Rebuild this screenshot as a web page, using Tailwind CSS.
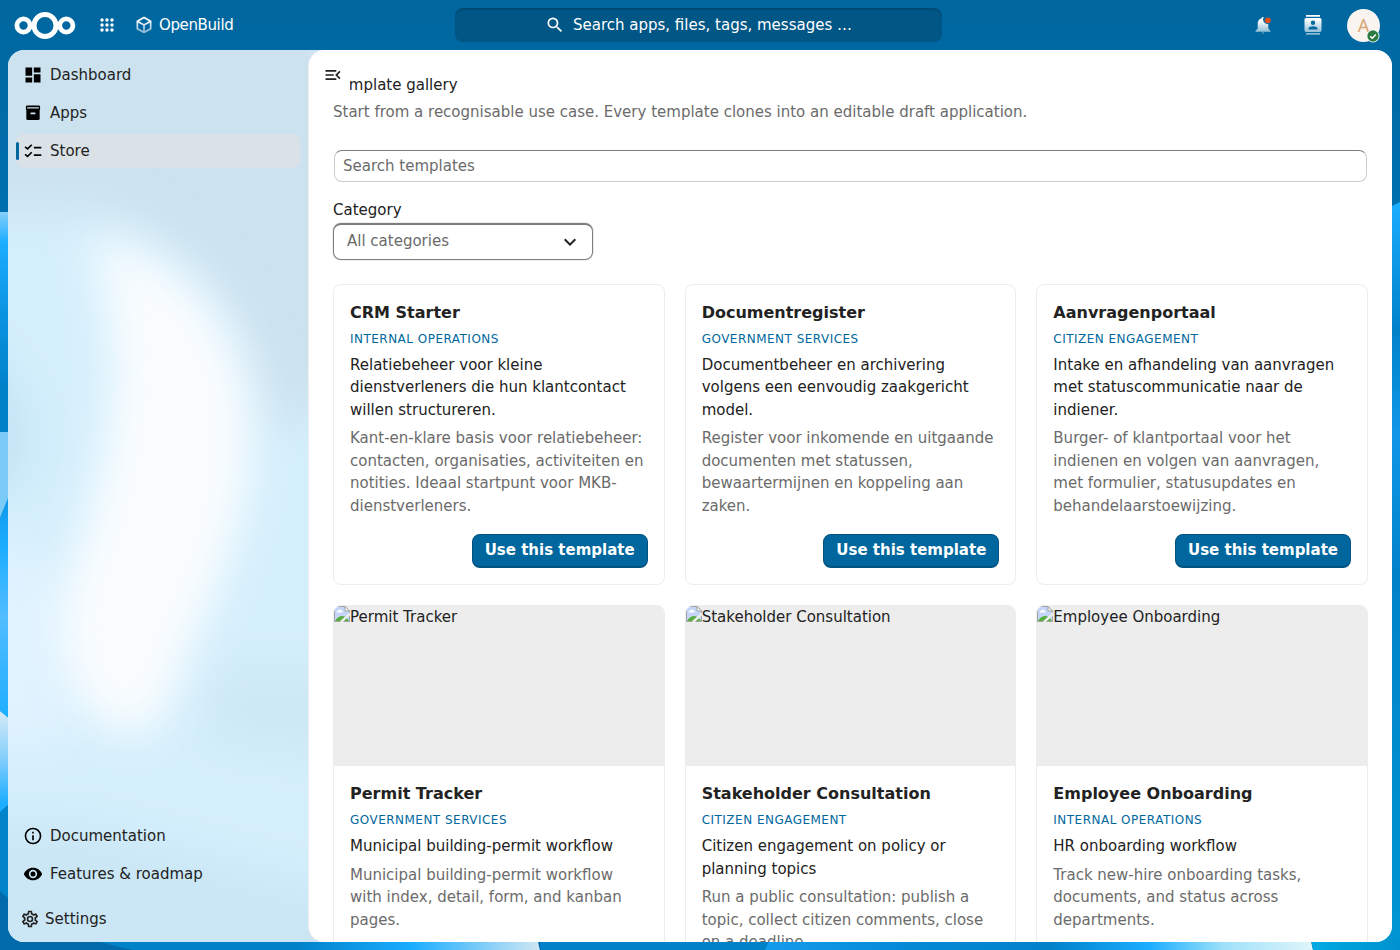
<!DOCTYPE html>
<html lang="en">
<head>
    <meta charset="UTF-8">
    <meta name="viewport" content="width=device-width, initial-scale=1.0">
    <title>Template gallery - OpenBuild</title>
    <script src="https://cdn.jsdelivr.net/npm/@tailwindcss/browser@4"></script>
</head>
<body class="relative flex h-screen flex-col overflow-hidden bg-[#006aa3] font-['DejaVu_Sans',sans-serif] text-[15px] leading-normal text-[#222]">
    <!-- Wallpaper -->
    <svg class="absolute inset-0 -z-10 h-full w-full" viewBox="0 0 1400 950" preserveAspectRatio="none" aria-hidden="true">
        <defs>
            <linearGradient id="base" x1="0" y1="0" x2="0" y2="1"><stop offset="0" stop-color="#00669e"/><stop offset="0.3" stop-color="#0073b5"/><stop offset="1" stop-color="#006aab"/></linearGradient>
            <linearGradient id="l1" x1="0" y1="0" x2="0" y2="1"><stop offset="0" stop-color="#86cffb"/><stop offset="0.14" stop-color="#1badff"/><stop offset="0.45" stop-color="#0b94e2"/><stop offset="0.8" stop-color="#0082c9"/><stop offset="1" stop-color="#0082c9"/></linearGradient>
            <linearGradient id="l2" x1="0" y1="0" x2="0" y2="1"><stop offset="0" stop-color="#0c94e4"/><stop offset="0.25" stop-color="#1badff"/><stop offset="0.55" stop-color="#52bdff"/><stop offset="1" stop-color="#1badff"/></linearGradient>
            <linearGradient id="l3" x1="0" y1="0" x2="0" y2="1"><stop offset="0" stop-color="#d5eaf5"/><stop offset="0.45" stop-color="#86cffb"/><stop offset="0.9" stop-color="#1badff"/><stop offset="1" stop-color="#1badff"/></linearGradient>
            <linearGradient id="b1" gradientUnits="userSpaceOnUse" x1="0" y1="0" x2="541" y2="0"><stop offset="0.4" stop-color="#0082c9"/><stop offset="0.55" stop-color="#0082c9"/><stop offset="0.76" stop-color="#1badff"/><stop offset="1" stop-color="#d0e7f3"/></linearGradient>
            <linearGradient id="b2" gradientUnits="userSpaceOnUse" x1="765" y1="0" x2="1313" y2="0"><stop offset="0" stop-color="#149cec"/><stop offset="0.25" stop-color="#048ad6"/><stop offset="0.52" stop-color="#0082c9"/><stop offset="0.7" stop-color="#1badff"/><stop offset="0.84" stop-color="#a0e2fa"/><stop offset="1" stop-color="#dff5fa"/></linearGradient>
            <linearGradient id="b3" x1="0" y1="0" x2="1" y2="0"><stop offset="0" stop-color="#00aae2"/><stop offset="1" stop-color="#0092cf"/></linearGradient>
            <linearGradient id="r1" x1="0" y1="0" x2="0" y2="1"><stop offset="0" stop-color="#1badff"/><stop offset="0.17" stop-color="#0082c9"/><stop offset="0.31" stop-color="#1097e8"/><stop offset="0.5" stop-color="#0082c9"/><stop offset="1" stop-color="#0096d2"/></linearGradient>
        </defs>
        <rect width="1400" height="950" fill="url(#base)"/>
        <path d="M100 942Q130 950 160 955H541L538 942Z" fill="url(#b1)"/>
        <path d="M538 930H780V950H541Z" fill="#0082c9"/>
        <path d="M769 941L765 950H1313L1311 941Z" fill="url(#b2)"/>
        <path d="M1384 210L1400 202V950H1384Z" fill="url(#r1)"/>
        <path d="M1311 940H1400V950H1313Z" fill="url(#b3)"/>
        <rect y="212" width="12" height="220" fill="url(#l1)"/>
        <path d="M0 432H12V490L0 518Z" fill="#7bcbf9"/>
        <path d="M0 518L12 488V722L0 711Z" fill="url(#l2)"/>
        <path d="M0 711L12 721V802L0 814Z" fill="url(#l3)"/>
        <path d="M0 812L12 801V902L0 891Z" fill="#0284cb"/>
    </svg>

    <header class="flex h-[50px] shrink-0 items-center text-white">
        <div class="flex flex-1 items-center pl-[13px]">
            <a href="#" aria-label="Home" class="block">
                <svg width="64" height="30" viewBox="0 0 64 30" fill="none" stroke="#fff">
                    <circle cx="10.500" cy="15.500" r="6.600" stroke-width="4.800"/>
                    <circle cx="32" cy="15.500" r="11" stroke-width="5"/>
                    <circle cx="53.300" cy="15.500" r="6.600" stroke-width="4.800"/>
                </svg>
            </a>
            <button type="button" aria-label="All apps" class="ml-4 p-1">
                <svg width="20" height="20" viewBox="0 0 20 20" fill="#fff">
                    <circle cx="5" cy="5" r="1.700"/><circle cx="10" cy="5" r="1.700"/><circle cx="15" cy="5" r="1.700"/>
                    <circle cx="5" cy="10" r="1.700"/><circle cx="10" cy="10" r="1.700"/><circle cx="15" cy="10" r="1.700"/>
                    <circle cx="5" cy="15" r="1.700"/><circle cx="10" cy="15" r="1.700"/><circle cx="15" cy="15" r="1.700"/>
                </svg>
            </button>
            <a href="#" class="ml-[13px] flex items-center gap-[5px]">
                <svg width="20" height="20" viewBox="0 0 24 24">
                    <defs><linearGradient id="fade" x1="0" y1="0" x2="0" y2="1"><stop offset="0.2" stop-color="#fff"/><stop offset="1" stop-color="#fff" stop-opacity="0.5"/></linearGradient></defs>
                    <path fill="url(#fade)" d="M21 16.500C21 16.880 20.790 17.210 20.470 17.380L12.570 21.820C12.410 21.940 12.210 22 12 22S11.590 21.940 11.430 21.820L3.530 17.380C3.210 17.210 3 16.880 3 16.500V7.500C3 7.120 3.210 6.790 3.530 6.620L11.430 2.180C11.590 2.060 11.790 2 12 2S12.410 2.060 12.570 2.180L20.470 6.620C20.790 6.790 21 7.120 21 7.500V16.500M12 4.150L6.040 7.500L12 10.850L17.960 7.500L12 4.150M5 15.910L11 19.290V12.580L5 9.210V15.910M19 15.910V9.210L13 12.580V19.290L19 15.910Z"/>
                </svg>
                <span class="tracking-tight">OpenBuild</span>
            </a>
        </div>
        <button type="button" class="flex h-[34px] w-[487px] items-center justify-center gap-2 rounded-lg bg-[#005685] shadow-[inset_0_2px_1px_rgba(0,0,0,0.12)]">
            <svg width="20" height="20" viewBox="0 0 24 24" fill="#fff"><path d="M9.500,3A6.500,6.500 0 0,1 16,9.500C16,11.110 15.410,12.590 14.440,13.730L14.710,14H15.500L20.500,19L19,20.500L14,15.500V14.710L13.730,14.440C12.590,15.410 11.110,16 9.500,16A6.500,6.500 0 0,1 3,9.500A6.500,6.500 0 0,1 9.500,3M9.500,5C7,5 5,7 5,9.500C5,12 7,14 9.500,14C12,14 14,12 14,9.500C14,7 12,5 9.500,5Z"/></svg>
            Search apps, files, tags, messages …
        </button>
        <div class="flex flex-1 items-center justify-end pr-4">
            <button type="button" aria-label="Notifications" class="mr-[30px]">
                <svg width="20" height="20" viewBox="0 0 20 20">
                    <path fill="url(#fade)" d="M10 2C9.200 2 8.700 2.600 8.700 3.300C6.100 4 4.700 6.100 4.700 8.500V13.500L2.500 16V16.700H17.500V16L15.300 13.500V8.900A4.500 4.500 0 0 1 10.700 2.200ZM8.500 17.500A1.600 1.600 0 0 0 11.500 17.500Z"/>
                    <circle cx="14.800" cy="5.300" r="2.900" fill="#e0501f"/>
                </svg>
            </button>
            <button type="button" aria-label="Contacts" class="mr-6">
                <svg width="20" height="20" viewBox="0 0 20 20">
                    <path fill="url(#fade)" fill-rule="evenodd" d="M3 0H17V1.700H3ZM3.200 2.900H16.800Q18.500 2.900 18.500 4.600V15.200Q18.500 16.900 16.800 16.900H3.200Q1.500 16.900 1.500 15.200V4.600Q1.500 2.900 3.200 2.900ZM10 5.600A2.200 2.200 0 1 0 10 10A2.200 2.200 0 1 0 10 5.600ZM5.500 14.500H14.500V13.500C14.500 12 11.800 11.200 10 11.200S5.500 12 5.500 13.500ZM3 18.100H17V19.800H3Z"/>
                </svg>
            </button>
            <button type="button" aria-label="Account menu" class="relative mr-1 flex size-[33px] items-center justify-center rounded-full bg-[#faf4f1] font-['Noto_Sans',sans-serif] text-lg text-[#d8a676]">
                <span>A</span>
                <svg class="absolute right-0 -bottom-px" width="14" height="14" viewBox="0 0 14 14"><circle cx="7" cy="7" r="6.500" fill="#fff"/><circle cx="7" cy="7" r="5.700" fill="#2d7b41"/><path d="M4.200 7.200L6.200 9.200L9.900 5.400" fill="none" stroke="#fff" stroke-width="1.500"/></svg>
            </button>
        </div>
    </header>

    <div class="mx-2 mb-2 flex min-h-0 flex-1 overflow-hidden rounded-2xl">
        <nav class="relative isolate flex w-[300px] shrink-0 flex-col bg-[#cde4f1]">
            <!-- Wallpaper seen through the frosted sidebar -->
            <svg class="absolute inset-0 -z-10 h-full w-full" viewBox="0 0 300 892" preserveAspectRatio="none" aria-hidden="true">
                <defs>
                    <filter id="soft" x="-50%" y="-50%" width="200%" height="200%"><feGaussianBlur stdDeviation="24"/></filter>
                    <filter id="softer" x="-60%" y="-50%" width="220%" height="200%"><feGaussianBlur stdDeviation="22"/></filter>
                </defs>
                <rect width="300" height="892" fill="#cce2ef"/>
                <g filter="url(#soft)">
                    <path d="M-90 160H80C190 190 250 290 250 380L420 320V980H-90Z" fill="#d4effc"/>
                    <path d="M-90 270Q30 300 22 420L-90 490Z" fill="#c2e4f4"/>
                    <path d="M-90 500Q60 450 60 600V700H-90Z" fill="#e0f3ff"/>
                    <path d="M200 620H420V720L200 690Z" fill="#cde8f5"/>
                    <path d="M-90 765L60 770L420 860V1000H-90Z" fill="#cbe6f5"/>
                </g>
                <path filter="url(#softer)" d="M80 185C170 200 232 270 242 360C248 450 215 530 182 600C165 640 155 690 120 685C70 675 40 610 55 540C90 440 130 330 80 185Z" fill="#fafdff"/>
            </svg>
            <ul class="flex flex-1 flex-col gap-1 p-2">
                <li>
                    <a href="#" class="flex h-[34px] items-center rounded-lg">
                        <span class="flex w-[34px] justify-center"><svg width="20" height="20" viewBox="0 0 24 24"><path d="M13,3V9H21V3M13,21H21V11H13M3,21H11V15H3M3,13H11V3H3V13Z"/></svg></span>
                        Dashboard
                    </a>
                </li>
                <li>
                    <a href="#" class="flex h-[34px] items-center rounded-lg">
                        <span class="flex w-[34px] justify-center"><svg width="20" height="20" viewBox="0 0 24 24"><path fill-rule="evenodd" d="M5 3H19Q20.500 3 20.500 4.500V8H20V19Q20 20.500 18.500 20.500H5.500Q4 20.500 4 19V8H3.500V4.500Q3.500 3 5 3ZM5 5V6.500H19V5ZM9.500 11.500Q9 11.500 9 12V13.500H15V12Q15 11.500 14.500 11.500Z"/></svg></span>
                        Apps
                    </a>
                </li>
                <li class="relative">
                    <a href="#" aria-current="page" class="flex h-[34px] items-center rounded-lg bg-[#dae2e7]">
                        <span class="absolute left-0 h-[18px] w-[3px] rounded-full bg-[#00679e]"></span>
                        <span class="flex w-[34px] justify-center"><svg width="20" height="20" viewBox="0 0 24 24" fill="none" stroke="#000" stroke-width="2"><path d="M2.500 7L5.500 9.500L10.500 4.500M2.500 16L5.500 18.500L10.500 13.500M13 8H22M13 17H22"/></svg></span>
                        Store
                    </a>
                </li>
            </ul>
            <ul class="flex flex-col gap-1 px-2">
                <li>
                    <a href="#" class="flex h-[34px] items-center rounded-lg">
                        <span class="flex w-[34px] justify-center"><svg width="20" height="20" viewBox="0 0 24 24"><path d="M11,9H13V7H11M12,20C7.590,20 4,16.410 4,12C4,7.590 7.590,4 12,4C16.410,4 20,7.590 20,12C20,16.410 16.410,20 12,20M12,2A10,10 0 0,0 2,12A10,10 0 0,0 12,22A10,10 0 0,0 22,12A10,10 0 0,0 12,2M11,17H13V11H11V17Z"/></svg></span>
                        Documentation
                    </a>
                </li>
                <li>
                    <a href="#" class="flex h-[34px] items-center rounded-lg">
                        <span class="flex w-[34px] justify-center"><svg width="20" height="20" viewBox="0 0 24 24"><path d="M12,9A3,3 0 0,0 9,12A3,3 0 0,0 12,15A3,3 0 0,0 15,12A3,3 0 0,0 12,9M12,17A5,5 0 0,1 7,12A5,5 0 0,1 12,7A5,5 0 0,1 17,12A5,5 0 0,1 12,17M12,4.500C7,4.500 2.730,7.610 1,12C2.730,16.390 7,19.500 12,19.500C17,19.500 21.270,16.390 23,12C21.270,7.610 17,4.500 12,4.500Z"/></svg></span>
                        Features &amp; roadmap
                    </a>
                </li>
            </ul>
            <div class="px-3 pt-[11px] pb-[6px]">
                <button type="button" class="flex h-[34px] w-full items-center gap-[5px]">
                    <svg width="20" height="20" viewBox="0 0 24 24" fill="#222"><path d="M12,8A4,4 0 0,1 16,12A4,4 0 0,1 12,16A4,4 0 0,1 8,12A4,4 0 0,1 12,8M12,10A2,2 0 0,0 10,12A2,2 0 0,0 12,14A2,2 0 0,0 14,12A2,2 0 0,0 12,10M10,22C9.750,22 9.540,21.820 9.500,21.580L9.130,18.930C8.500,18.680 7.960,18.340 7.440,17.940L4.950,18.950C4.730,19.030 4.460,18.950 4.340,18.730L2.340,15.270C2.210,15.050 2.270,14.780 2.460,14.630L4.570,12.970L4.500,12L4.570,11L2.460,9.370C2.270,9.220 2.210,8.950 2.340,8.730L4.340,5.270C4.460,5.050 4.730,4.960 4.950,5.050L7.440,6.050C7.960,5.660 8.500,5.320 9.130,5.070L9.500,2.420C9.540,2.180 9.750,2 10,2H14C14.250,2 14.460,2.180 14.500,2.420L14.870,5.070C15.500,5.320 16.040,5.660 16.560,6.050L19.050,5.050C19.270,4.960 19.540,5.050 19.660,5.270L21.660,8.730C21.790,8.950 21.730,9.220 21.540,9.370L19.430,11L19.500,12L19.430,13L21.540,14.630C21.730,14.780 21.790,15.050 21.660,15.270L19.660,18.730C19.540,18.950 19.270,19.040 19.050,18.950L16.560,17.950C16.040,18.340 15.500,18.680 14.870,18.930L14.500,21.580C14.460,21.820 14.250,22 14,22H10M11.250,4L10.880,6.610C9.680,6.860 8.620,7.500 7.850,8.390L5.440,7.350L4.690,8.650L6.800,10.200C6.400,11.370 6.400,12.640 6.800,13.800L4.680,15.360L5.430,16.660L7.860,15.620C8.630,16.500 9.680,17.140 10.870,17.380L11.240,20H12.760L13.130,17.390C14.320,17.140 15.370,16.500 16.140,15.620L18.570,16.660L19.320,15.360L17.200,13.810C17.600,12.640 17.600,11.370 17.200,10.200L19.310,8.650L18.560,7.350L16.150,8.390C15.380,7.500 14.320,6.860 13.120,6.620L12.750,4H11.250Z"/></svg>
                    Settings
                </button>
            </div>
        </nav>

        <div class="flex min-w-0 flex-1 bg-[#cee4f1]">
            <main class="relative min-w-0 flex-1 overflow-hidden rounded-l-2xl border-l border-[#ededed] bg-white px-6">
                <!-- Navigation toggle floats over the heading -->
                <button type="button" aria-label="Close navigation" class="absolute top-2 left-[7px] flex size-[34px] items-center justify-center rounded-sm bg-white">
                    <svg width="20" height="20" viewBox="0 0 24 24" fill="#222"><path d="M21,15.610L19.590,17L14.580,12L19.590,7L21,8.390L17.440,12L21,15.610M3,6H16V8H3V6M3,13V11H13V13H3M3,18V16H16V18H3Z"/></svg>
                </button>
                <h2 class="pt-6">Template gallery</h2>
                <p class="mt-1 text-[#6b6b6b]">Start from a recognisable use case. Every template clones into an editable draft application.</p>
                <div class="mt-[27px] px-px">
                    <input type="text" placeholder="Search templates" aria-label="Search templates" class="block h-8 w-full rounded-lg border border-[#ccc] border-t-[#7d7d7d] bg-white px-2 placeholder:text-[#6b6b6b]">
                </div>
                <label for="category" class="mt-[17px] block">Category</label>
                <div class="relative mt-px w-[260px]">
                    <select id="category" class="block h-[37px] w-full appearance-none rounded-lg border border-t-2 border-[#7d7d7d] bg-white px-[13px] text-[#6b6b6b] shadow-[0_0_0_1px_#eee]">
                        <option>All categories</option>
                        <option>Internal operations</option>
                        <option>Government services</option>
                        <option>Citizen engagement</option>
                    </select>
                    <svg class="pointer-events-none absolute top-[7px] right-[11px]" width="24" height="24" viewBox="0 0 24 24" fill="#222"><path d="M7.410,8.580L12,13.170L16.590,8.580L18,10L12,16L6,10L7.410,8.580Z"/></svg>
                </div>
                <div id="templates" class="mt-6 grid grid-cols-3 gap-5"></div>
            </main>
        </div>
    </div>

    <script>
        const templates = [
            { title: 'CRM Starter', category: 'Internal operations', summary: 'Relatiebeheer voor kleine dienstverleners die hun klantcontact willen structureren.', description: 'Kant-en-klare basis voor relatiebeheer: contacten, organisaties, activiteiten en notities. Ideaal startpunt voor MKB-dienstverleners.' },
            { title: 'Documentregister', category: 'Government services', summary: 'Documentbeheer en archivering volgens een eenvoudig zaakgericht model.', description: 'Register voor inkomende en uitgaande documenten met statussen, bewaartermijnen en koppeling aan zaken.' },
            { title: 'Aanvragenportaal', category: 'Citizen engagement', summary: 'Intake en afhandeling van aanvragen met statuscommunicatie naar de indiener.', description: 'Burger- of klantportaal voor het indienen en volgen van aanvragen, met formulier, statusupdates en behandelaarstoewijzing.' },
            { title: 'Permit Tracker', category: 'Government services', summary: 'Municipal building-permit workflow', description: 'Municipal building-permit workflow with index, detail, form, and kanban pages.', preview: true },
            { title: 'Stakeholder Consultation', category: 'Citizen engagement', summary: 'Citizen engagement on policy or planning topics', description: 'Run a public consultation: publish a topic, collect citizen comments, close on a deadline.', preview: true },
            { title: 'Employee Onboarding', category: 'Internal operations', summary: 'HR onboarding workflow', description: 'Track new-hire onboarding tasks, documents, and status across departments.', preview: true },
        ];

        // Placeholder for a preview whose picture is missing
        function renderPreview(template) {
            return template.preview ? `
                <div class="flex h-40 items-start bg-[#ededed]">
                    <svg class="shrink-0" width="16" height="16" viewBox="0 0 16 16">
                        <path d="M0.500 0.500H11L15.500 5V15.500H0.500Z" fill="#c3d6f7" stroke="#a3a3a3"/>
                        <path d="M11 0.500V5H15.500Z" fill="#fff" stroke="#a3a3a3"/>
                        <path d="M2.500 6.500Q3 4.500 4.500 4.500Q6 2.500 7.500 4.500Q9 5 8.500 6.500Z" fill="#fff"/>
                        <path d="M1 15Q3.500 10.500 8 10Q12 10 15 15Z" fill="#56ae3c"/>
                        <path d="M16.500 7.500L7 16" stroke="#ededed" stroke-width="2.500"/>
                    </svg>
                    <span class="leading-[22px]">${template.title}</span>
                </div>` : '';
        }

        document.getElementById('templates').innerHTML = templates.map(template => `
            <article class="flex flex-col overflow-hidden rounded-lg border border-[#ededed] bg-white">
                ${renderPreview(template)}
                <div class="flex flex-1 flex-col gap-[6px] p-4">
                    <h3 class="text-base leading-[23px] font-bold">${template.title}</h3>
                    <p class="text-xs leading-[18px] tracking-[0.04em] text-[#00679e] uppercase">${template.category}</p>
                    <p>${template.summary}</p>
                    <p class="text-[#6b6b6b]">${template.description}</p>
                    <div class="mt-auto flex justify-end pt-[11px]">
                        <button type="button" class="h-[34px] rounded-lg border border-b-2 border-[#005280] bg-[#00679e] px-3 font-bold text-white">Use this template</button>
                    </div>
                </div>
            </article>
        `).join('');
    </script>
</body>
</html>
